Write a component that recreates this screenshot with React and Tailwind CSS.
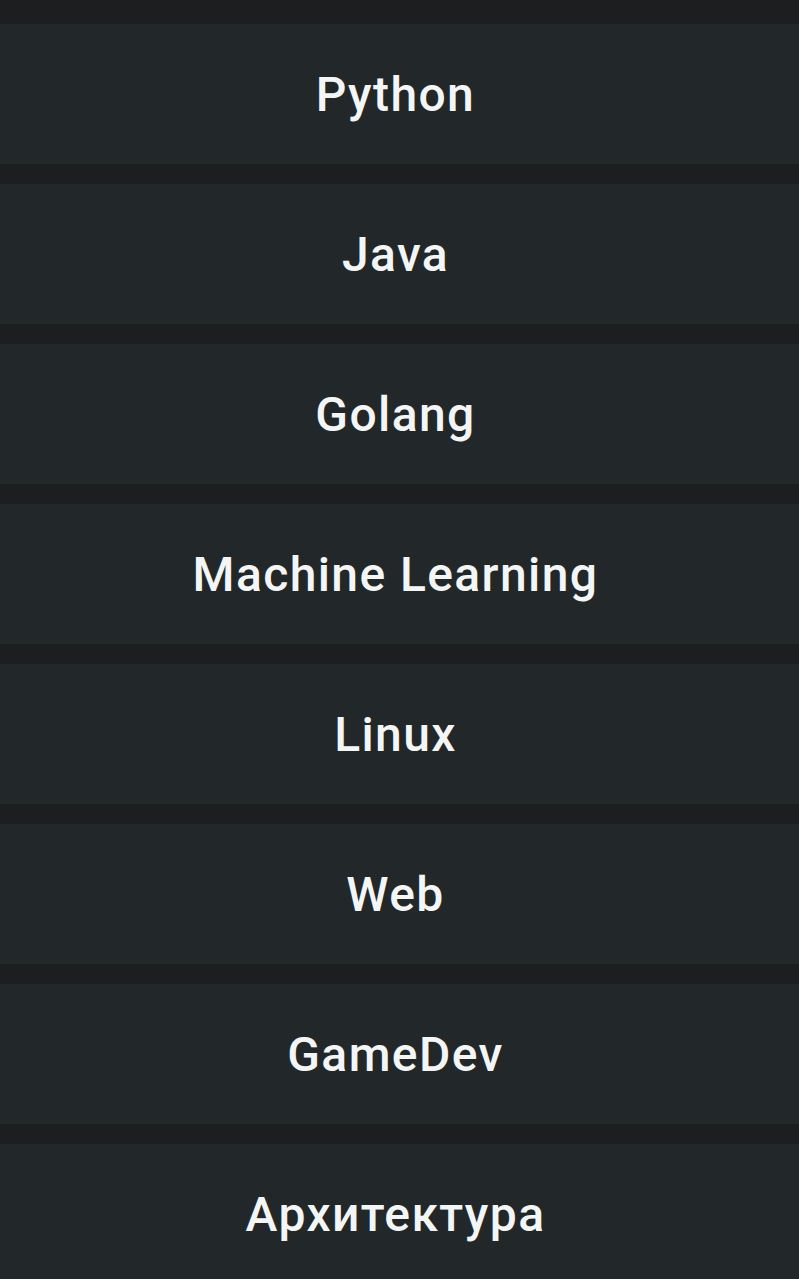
const topics = ['Python', 'Java', 'Golang', 'Machine Learning', 'Linux', 'Web', 'GameDev', 'Архитектура'];

export default function App() {
  return (
    <div
      className="min-h-screen bg-[#1c1e1f] pt-[24px] flex flex-col gap-[20px]"
      style={{ fontFamily: 'Roboto, "Noto Sans", sans-serif' }}
    >
      {topics.map((t) => (
        <div key={t} className="h-[140px] shrink-0 bg-[#222829] flex items-center justify-center pr-[8px]">
          <span className="text-[48px] leading-none font-medium tracking-[1.4px] text-[#f4f5f5] pt-[2px]">{t}</span>
        </div>
      ))}
    </div>
  );
}
